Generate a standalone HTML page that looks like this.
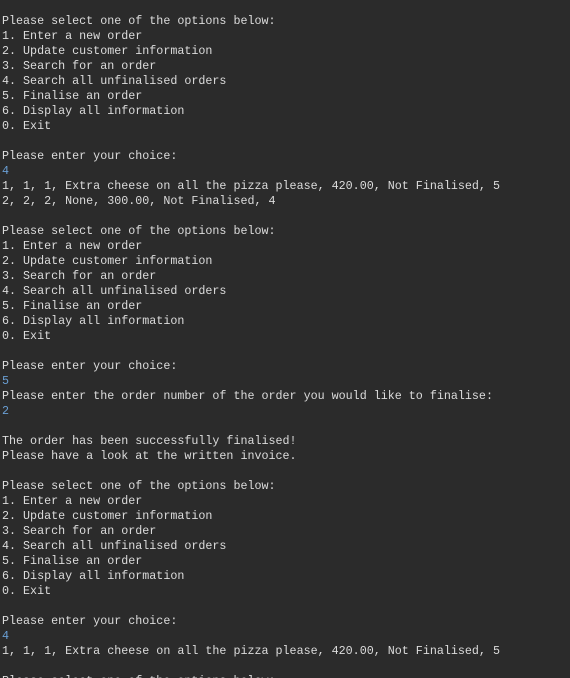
<!DOCTYPE html>
<html><head><meta charset="utf-8"><style>
html,body{margin:0;padding:0;background:#2b2b2b;width:570px;height:678px;overflow:hidden}
pre{margin:0;padding:14px 0 0 2px;font-family:"Liberation Mono",monospace;font-size:11.7px;line-height:15px;color:#dcdcdc;white-space:pre}
.i{color:#6a9fd4}
</style></head><body><pre>Please select one of the options below:
1. Enter a new order
2. Update customer information
3. Search for an order
4. Search all unfinalised orders
5. Finalise an order
6. Display all information
0. Exit

Please enter your choice:
<span class="i">4</span>
1, 1, 1, Extra cheese on all the pizza please, 420.00, Not Finalised, 5
2, 2, 2, None, 300.00, Not Finalised, 4

Please select one of the options below:
1. Enter a new order
2. Update customer information
3. Search for an order
4. Search all unfinalised orders
5. Finalise an order
6. Display all information
0. Exit

Please enter your choice:
<span class="i">5</span>
Please enter the order number of the order you would like to finalise:
<span class="i">2</span>

The order has been successfully finalised!
Please have a look at the written invoice.

Please select one of the options below:
1. Enter a new order
2. Update customer information
3. Search for an order
4. Search all unfinalised orders
5. Finalise an order
6. Display all information
0. Exit

Please enter your choice:
<span class="i">4</span>
1, 1, 1, Extra cheese on all the pizza please, 420.00, Not Finalised, 5

Please select one of the options below:
</pre></body></html>
